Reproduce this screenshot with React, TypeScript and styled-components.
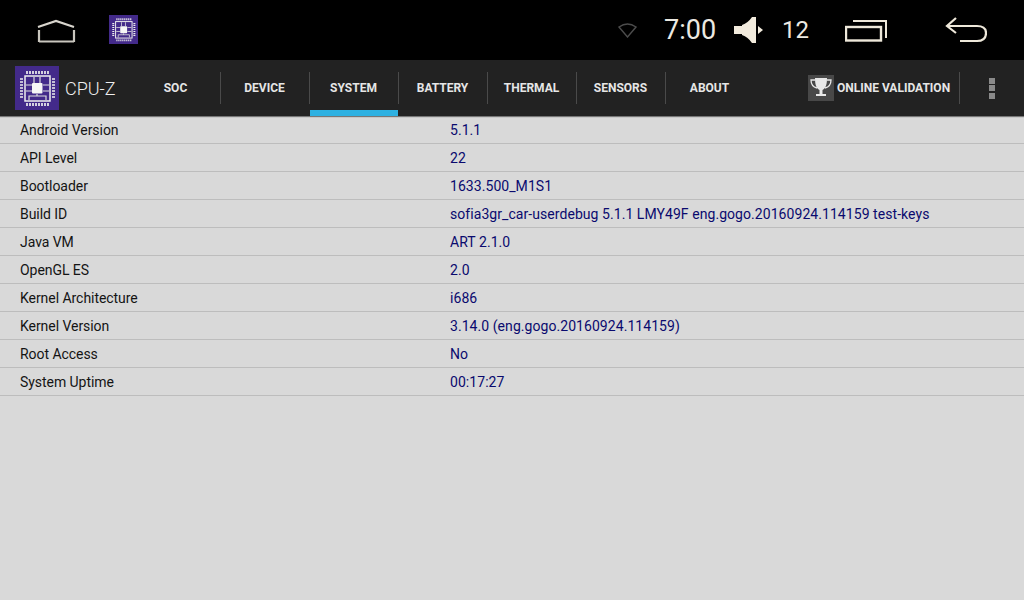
import React from "react"
import styled, { createGlobalStyle } from "styled-components"

const GlobalStyle = createGlobalStyle`
  html, body {
    margin: 0;
    padding: 0;
    background: #d9d9d9;
    font-family: Roboto, "Liberation Sans", sans-serif;
  }
`

const Screen = styled.div`
  width: 1024px;
  height: 600px;
  display: flex;
  flex-direction: column;
  overflow: hidden;
  background: #d9d9d9;
`

const StatusBar = styled.div`
  height: 60px;
  flex: none;
  display: flex;
  align-items: center;
  padding-left: 37px;
  background: #000;
`
const StatusGroup = styled.div`
  margin-left: 480px;
  display: flex;
  align-items: center;
`
const Clock = styled.span`
  margin-left: 27px;
  width: 70px;
  font-size: 27px;
  line-height: 60px;
  color: #ece9e2;
`
const VolumeValue = styled.span`
  margin-left: 19px;
  width: 63px;
  font-size: 24px;
  line-height: 60px;
  color: #ece9e2;
`
const HomeIcon = styled.svg`
  flex: none;
  width: 39px;
  height: 24px;
  margin-top: 2px;
`
const AppIcon = styled.svg`
  flex: none;
  width: 29px;
  height: 29px;
  margin-left: 33px;
  margin-top: -1px;
`
const BackIcon = styled.svg`
  flex: none;
  width: 42px;
  height: 26px;
  margin-left: 58px;
`

const Toolbar = styled.div`
  height: 56px;
  flex: none;
  display: flex;
  align-items: stretch;
  background: #222222;
  box-shadow: 0 1px 1px rgba(0, 0, 0, 0.45);
  position: relative;
`
const Brand = styled.div`
  width: 132px;
  flex: none;
  display: flex;
  align-items: center;
  padding-left: 15px;
  box-sizing: border-box;
`
const BrandLogo = styled.svg`
  width: 44px;
  height: 44px;
  flex: none;
`
const BrandName = styled.span`
  margin-left: 6px;
  margin-top: 1px;
  font-size: 18px;
  font-weight: 300;
  color: #eeeeee;
`
const Tabs = styled.div`
  display: flex;
`
const Tab = styled.div<{ $active?: boolean; $divided?: boolean }>`
  width: 89px;
  flex: none;
  box-sizing: border-box;
  display: flex;
  align-items: center;
  justify-content: center;
  font-size: 12px;
  font-weight: 700;
  color: #e6e6e6;
  position: relative;
  padding-right: 2px;

  &::after {
    content: "";
    display: ${(p) => (p.$divided ? "block" : "none")};
    position: absolute;
    right: 0;
    top: 12px;
    height: 32px;
    width: 1px;
    background: #4a4a4a;
  }

  &::before {
    content: "";
    display: ${(p) => (p.$active ? "block" : "none")};
    position: absolute;
    left: 0;
    right: 1px;
    bottom: 0;
    height: 6px;
    background: #2eb1e2;
  }
`
const Validation = styled.div`
  margin-left: 53px;
  width: 152px;
  flex: none;
  display: flex;
  align-items: center;
  position: relative;
  font-size: 12px;
  font-weight: 700;
  color: #e6e6e6;

  &::after {
    content: "";
    position: absolute;
    right: 0;
    top: 12px;
    height: 32px;
    width: 1px;
    background: #4a4a4a;
  }
`
const TrophyBox = styled.div`
  width: 26px;
  height: 26px;
  margin-right: 3px;
  flex: none;
  background: #484848;
  display: flex;
  align-items: center;
  justify-content: center;
`
const Overflow = styled.div`
  margin-left: 29px;
  width: 6px;
  flex: none;
  display: flex;
  flex-direction: column;
  justify-content: center;
  gap: 1.5px;
`
const Dot = styled.span`
  width: 6px;
  height: 6px;
  background: #8a8a8a;
`

const InfoList = styled.div`
  display: flex;
  flex-direction: column;
`
const Row = styled.div`
  height: 28px;
  box-sizing: border-box;
  display: flex;
  align-items: center;
  padding-left: 20px;
  border-bottom: 1px solid #bdbdbd;
  font-size: 14px;
`
const Label = styled.span`
  width: 430px;
  flex: none;
  color: #141414;
  letter-spacing: -0.05px;
`
const Value = styled.span`
  color: #0a0a6e;
  letter-spacing: 0.06px;
`

const CpuDrawing: React.FC = () => (
  <>
    <rect width="44" height="44" fill="#432a8a" />
    <rect x="10" y="10" width="25" height="25" fill="none" stroke="#eee" strokeWidth="1.5" />
    <rect x="17" y="17" width="10.500" height="10.500" rx="1" fill="#f6f6f6" />
    <path
      d="M12 5v3M15 5v3M18 5v3M21 5v3M24 5v3M27 5v3M30 5v3M33 5v3M12 37v3M15 37v3M18 37v3M21 37v3M24 37v3M27 37v3M30 37v3M33 37v3M5 13h3M5 16h3M5 19h3M5 22h3M5 25h3M5 28h3M5 31h3M37 13h3M37 16h3M37 19h3M37 22h3M37 25h3M37 28h3M37 31h3"
      stroke="#eee"
      strokeWidth="1.7"
    />
    <path
      d="M19 11v6M25 11v6M11 19h6M11 25h6M28 19h6M28 25h6M14 34v-4h17v4M22 28v2"
      fill="none"
      stroke="#ddd"
      strokeWidth="1.2"
    />
  </>
)

const rows = [
  ["Android Version", "5.1.1"],
  ["API Level", "22"],
  ["Bootloader", "1633.500_M1S1"],
  ["Build ID", "sofia3gr_car-userdebug 5.1.1 LMY49F eng.gogo.20160924.114159 test-keys"],
  ["Java VM", "ART 2.1.0"],
  ["OpenGL ES", "2.0"],
  ["Kernel Architecture", "i686"],
  ["Kernel Version", "3.14.0 (eng.gogo.20160924.114159)"],
  ["Root Access", "No"],
  ["System Uptime", "00:17:27"],
]

const tabs = ["SOC", "DEVICE", "SYSTEM", "BATTERY", "THERMAL", "SENSORS", "ABOUT"]

const App: React.FC = () => {
  return (
    <Screen>
      <GlobalStyle />
      <StatusBar>
        <HomeIcon viewBox="0 0 39 24">
          <path d="M1 8 L19 2 L37 8" fill="none" stroke="#d8d5cd" strokeWidth="2.2" />
          <path d="M2 22.500H37M2 11v12M37 11v12" fill="none" stroke="#c9c6be" strokeWidth="2.2" />
        </HomeIcon>
        <AppIcon viewBox="0 0 44 44">
          <CpuDrawing />
        </AppIcon>
        <StatusGroup>
          <svg width="19" height="16" viewBox="0 0 19 16">
            <path d="M1 5 Q9.500 -1 18 5 L9.500 15 Z" fill="none" stroke="#4c4c4c" strokeWidth="1.4" />
          </svg>
          <Clock>7:00</Clock>
          <svg width="29" height="26" viewBox="0 0 29 26">
            <path d="M0 9h8v8H0z" fill="#f2ebdd" />
            <path d="M8 8 Q14 6 18 0 H22 V26 H18 Q14 20 8 18z" fill="#f2ebdd" />
            <path d="M24 9 L29 13 L24 17z" fill="#f2ebdd" />
          </svg>
          <VolumeValue>12</VolumeValue>
          <svg width="42" height="24" viewBox="0 0 42 24">
            <rect x="1" y="9" width="35" height="13.500" fill="none" stroke="#eee8da" strokeWidth="2.400" />
            <path d="M8 3H41V20" fill="none" stroke="#eee8da" strokeWidth="2" />
          </svg>
          <BackIcon viewBox="0 0 42 26">
            <path
              d="M11 1 L2 9 L11 16 M2 9 H32 Q41 9 41 16 Q41 24 32 24 H15"
              fill="none"
              stroke="#eee8da"
              strokeWidth="2.200"
            />
          </BackIcon>
        </StatusGroup>
      </StatusBar>
      <Toolbar>
        <Brand>
          <BrandLogo viewBox="0 0 44 44">
            <CpuDrawing />
          </BrandLogo>
          <BrandName>CPU-Z</BrandName>
        </Brand>
        <Tabs>
          {tabs.map((t, i) => (
            <Tab key={t} $active={t === "SYSTEM"} $divided={i < tabs.length - 1}>
              {t}
            </Tab>
          ))}
        </Tabs>
        <Validation>
          <TrophyBox>
            <svg width="22" height="23" viewBox="0 0 22 23">
              <path d="M5 1h12c0 6-1 10-4.500 12v4H16v2H6v-2h3.500v-4C6 11 5 7 5 1z" fill="#e8e8e8" />
              <path
                d="M5 3H1c0 4 2 7 6 8M17 3h4c0 4-2 7-6 8"
                fill="none"
                stroke="#e8e8e8"
                strokeWidth="1.300"
              />
            </svg>
          </TrophyBox>
          ONLINE VALIDATION
        </Validation>
        <Overflow>
          <Dot />
          <Dot />
          <Dot />
        </Overflow>
      </Toolbar>
      <InfoList>
        {rows.map(([label, value]) => (
          <Row key={label}>
            <Label>{label}</Label>
            <Value>{value}</Value>
          </Row>
        ))}
      </InfoList>
    </Screen>
  )
}

export default App
